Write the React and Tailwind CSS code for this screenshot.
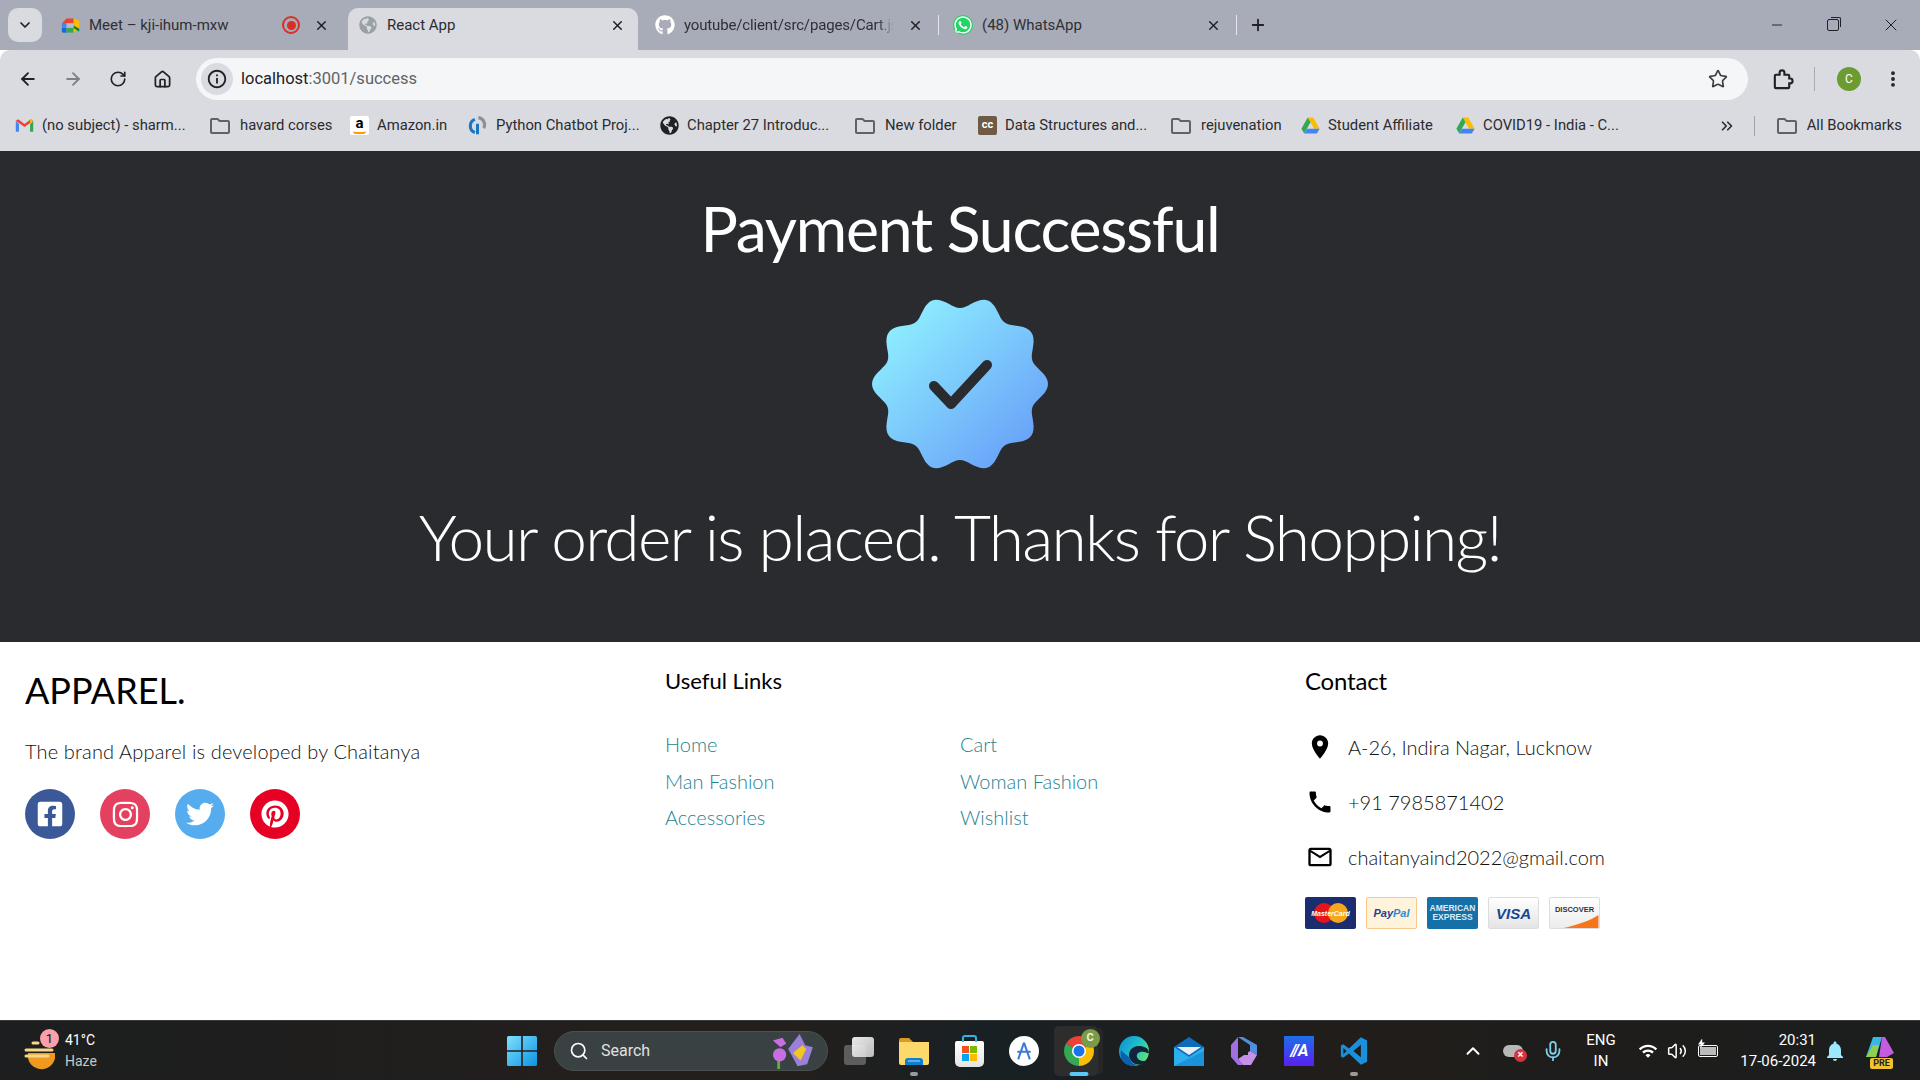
import React from 'react';
import { ArrowLeft, ArrowRight, RotateCw, Home, Star, X, Plus, Minus, EllipsisVertical, ChevronDown, ChevronUp, ChevronsRight, Search, Mic, Volume2 } from 'lucide-react';
import { FaFacebookSquare, FaInstagram, FaTwitter, FaPinterest, FaGithub, FaWhatsapp, FaGlobeAmericas } from 'react-icons/fa';
import { MdRoom, MdPhone, MdMailOutline, MdInfoOutline, MdOutlineFolder, MdWifi, MdNotifications } from 'react-icons/md';

// wavy badge outline, 10 lobes with a notch on top
const badgePath = (() => {
    const pts = [];
    for (let i = 0; i < 360; i += 2) {
        const t = (i * Math.PI) / 180;
        const r = 82 - 6 * Math.cos(10 * t);
        pts.push(`${(88 + r * Math.sin(t)).toFixed(1)},${(88 - r * Math.cos(t)).toFixed(1)}`);
    }
    return `M${pts.join('L')}Z`;
})();

const Sector = ({ a, b, r = 12, fill }) => {
    const p = (deg) => `${12 + r * Math.cos((deg * Math.PI) / 180)} ${12 + r * Math.sin((deg * Math.PI) / 180)}`;
    return <path d={`M12 12L${p(a)}A${r} ${r} 0 0 1 ${p(b)}Z`} fill={fill} />;
};

const ChromeIcon = () => (
    <svg viewBox="0 0 24 24" className="w-[30px] h-[30px]">
        <Sector a={-150} b={-30} fill="#ea4335" />
        <Sector a={-30} b={90} fill="#fbbc04" />
        <Sector a={90} b={210} fill="#34a853" />
        <circle cx="12" cy="12" r="5.6" fill="#fff" />
        <circle cx="12" cy="12" r="4.4" fill="#1a73e8" />
    </svg>
);

const DriveIcon = () => (
    <svg viewBox="0 0 24 24" className="w-[19px] h-[19px]">
        <path d="M8.5 2h7l8 14h-7z" fill="#fbbc04" />
        <path d="M8.5 2l-8 14 3.5 6 8-14z" fill="#34a853" />
        <path d="M4 22h16l3.500-6h-16z" fill="#4285f4" />
    </svg>
);

const GmailIcon = () => (
    <svg viewBox="0 0 24 24" className="w-[19px] h-[19px]">
        <path d="M1 6v14h4V10z" fill="#4285f4" />
        <path d="M23 6v14h-4V10z" fill="#34a853" />
        <path d="M1 6l11 8 11-8-3-2-8 6-8-6z" fill="#ea4335" />
        <path d="M20 4l3 2-4 4V6z" fill="#fbbc04" />
    </svg>
);

const MeetIcon = () => (
    <svg viewBox="0 0 24 24" className="w-[19px] h-[19px]">
        <path d="M7 3h9v6H1z" fill="#ea4335" />
        <path d="M1 9h6v6H1z" fill="#4285f4" />
        <path d="M1 15h6v6H3a2 2 0 0 1-2-2z" fill="#1967d2" />
        <path d="M7 15h9v6H7z" fill="#34a853" />
        <path d="M7 9h9v6H7z" fill="#fff" fillOpacity="0.2" />
        <path d="M16 3v18l7-6V6z" fill="#fbbc04" />
        <path d="M16 12l7 4V20l-7-5z" fill="#00832d" />
    </svg>
);

const FolderIcon = () => <MdOutlineFolder className="w-[24px] h-[24px] text-[#5f6368] shrink-0" />;

const Tab = ({ w, pl, mr, icon, title, extra, active, fade, sep }) => (
    <div className={`relative h-[42px] pb-[8px] flex items-center shrink-0 ${w} ${pl} ${active ? 'bg-[#d9dbe1] rounded-t-[10px]' : ''}`}>
        <div className="w-[20px] flex justify-center shrink-0">{icon}</div>
        <div className={`ml-[9px] flex-1 overflow-hidden whitespace-nowrap text-[15px] ${active ? 'text-[#2a2c30]' : 'text-[#2e3034]'} ${fade ? 'tracking-[-0.15px] [mask-image:linear-gradient(to_right,black_92%,transparent)]' : ''}`}>
            {title}
        </div>
        {extra}
        <X size={15} strokeWidth={2.4} className={`text-[#202124] ml-[14px] shrink-0 ${mr}`} />
        {sep && <div className="w-px h-[20px] bg-[#e6e7ea] absolute right-0 top-[7px]" />}
    </div>
);

const Bookmark = ({ w, icon, label }) => (
    <div className={`flex items-center gap-[8px] shrink-0 whitespace-nowrap ${w}`}>
        {icon}
        <span>{label}</span>
    </div>
);

const BrowserChrome = () => (
    <div className="font-['Roboto',sans-serif]">
        <div className="h-[50px] bg-[#a8acb8] flex items-end pl-[8px]">
            <div className="h-[34px] w-[34px] mb-[8px] rounded-[10px] bg-[#d9dbe1] flex items-center justify-center shrink-0">
                <ChevronDown size={16} strokeWidth={2.6} className="text-[#202124]" />
            </div>
            <Tab
                w="w-[306px]"
                pl="pl-[18px]"
                mr="mr-[19px]"
                icon={<MeetIcon />}
                title="Meet – kji-ihum-mxw"
                extra={
                    <div className="w-[18px] h-[18px] rounded-full border-2 border-[#d93025] flex items-center justify-center shrink-0">
                        <div className="w-[9px] h-[9px] rounded-full bg-[#d93025]" />
                    </div>
                }
            />
            <Tab w="w-[290px]" pl="pl-[10px]" mr="mr-[13px]" active icon={<FaGlobeAmericas className="w-[18px] h-[18px] text-[#9aa0a6]" />} title="React App" />
            <Tab w="w-[301px]" pl="pl-[17px]" mr="mr-[16px]" fade sep icon={<FaGithub className="w-[20px] h-[20px] text-white" />} title="youtube/client/src/pages/Cart.js" />
            <Tab w="w-[298px]" pl="pl-[14px]" mr="mr-[16px]" sep icon={<FaWhatsapp className="w-[20px] h-[20px] text-white bg-[#25d366] rounded-full" />} title="(48) WhatsApp" />
            <div className="h-[42px] pb-[8px] flex items-center ml-[12px]">
                <Plus size={18} strokeWidth={2.4} className="text-[#202124]" />
            </div>
            <div className="ml-auto h-[50px] flex items-center text-[#202124]">
                <Minus size={16} strokeWidth={1.4} className="mr-[42px]" />
                <div className="relative w-[12px] h-[12px] border border-[#202124] rounded-[2px] mr-[42px]">
                    <div className="absolute -top-[3px] -right-[3px] w-[10px] h-[10px] border-t border-r border-[#202124] rounded-tr-[2px]" />
                </div>
                <X size={20} strokeWidth={1.2} className="mr-[19px]" />
            </div>
        </div>
        <div className="h-[50px] bg-[#d9dbe1] rounded-t-[10px] flex items-center text-[#202124]">
            <div className="flex items-center mt-[8px] pl-[18px]">
                <ArrowLeft size={20} strokeWidth={2.2} />
                <ArrowRight size={20} strokeWidth={2.2} className="ml-[25px] text-[#7d8087]" />
                <RotateCw size={18} strokeWidth={2.2} className="ml-[26px]" />
                <Home size={19} strokeWidth={2.2} className="ml-[26px]" />
                <div className="ml-[24px] w-[1552px] h-[42px] rounded-full bg-[#f5f6f8] flex items-center pl-[5px] shrink-0">
                    <div className="w-[32px] h-[32px] rounded-full bg-[#d9dbe1] flex items-center justify-center">
                        <MdInfoOutline className="w-[22px] h-[22px]" />
                    </div>
                    <div className="ml-[8px] text-[16.5px] text-[#202124] pt-[1px]">
                        localhost<span className="text-[#5f6368]">:3001/success</span>
                    </div>
                    <Star size={20} strokeWidth={2} className="ml-auto mr-[20px] text-[#3c4043]" />
                </div>
                <svg viewBox="0 0 24 24" className="ml-[23px] w-[23px] h-[23px]" fill="none" stroke="#202124" strokeWidth="2.2">
                    <path d="M5 7h4V5a2.500 2.500 0 0 1 5 0v2h4a1 1 0 0 1 1 1v3h1a2.500 2.500 0 0 1 0 5h-1v4a1 1 0 0 1-1 1H5a1 1 0 0 1-1-1V8a1 1 0 0 1 1-1z" />
                </svg>
                <div className="ml-[20px] w-px h-[24px] bg-[#a9abb2]" />
                <div className="ml-[22px] w-[24px] h-[24px] rounded-full bg-[#6c9b32] text-white text-[12px] flex items-center justify-center">C</div>
                <EllipsisVertical size={20} strokeWidth={2.6} className="ml-[22px]" />
            </div>
        </div>
        <div className="h-[51px] bg-[#d9dbe1] flex items-center pl-[15px] text-[14.8px] text-[#2a2c30]">
            <Bookmark w="w-[193px]" icon={<GmailIcon />} label="(no subject) - sharm..." />
            <Bookmark w="w-[142px]" icon={<FolderIcon />} label="havard corses" />
            <Bookmark
                w="w-[117px]"
                icon={
                    <div className="relative w-[19px] h-[19px] bg-white rounded-[2px] flex justify-center text-[15px] leading-[15px] font-bold text-black">
                        a<div className="absolute bottom-[1px] left-[3px] w-[13px] h-[3px] border-b-2 border-[#f90] rounded-b-full" />
                    </div>
                }
                label="Amazon.in"
            />
            <Bookmark
                w="w-[193px]"
                icon={
                    <svg viewBox="0 0 24 24" className="w-[21px] h-[21px]" fill="none" strokeWidth="3.5">
                        <path d="M9 5a8 8 0 0 0 0 15" stroke="#1a76c4" />
                        <path d="M12 22V10" stroke="#1a76c4" />
                        <path d="M13 3a8 8 0 0 1 6 12" stroke="#8a9099" />
                    </svg>
                }
                label="Python Chatbot Proj..."
            />
            <Bookmark w="w-[193px]" icon={<FaGlobeAmericas className="w-[19px] h-[19px] text-[#202124]" />} label="Chapter 27 Introduc..." />
            <Bookmark w="w-[125px]" icon={<FolderIcon />} label="New folder" />
            <Bookmark
                w="w-[191px]"
                icon={<div className="w-[19px] h-[19px] rounded-[2px] bg-[#6f5a45] text-white text-[11px] font-bold flex items-center justify-center">cc</div>}
                label="Data Structures and..."
            />
            <Bookmark w="w-[132px]" icon={<FolderIcon />} label="rejuvenation" />
            <Bookmark w="w-[155px]" icon={<DriveIcon />} label="Student Affiliate" />
            <Bookmark w="w-[200px]" icon={<DriveIcon />} label="COVID19 - India - C..." />
            <div className="ml-auto flex items-center pr-[18px]">
                <ChevronsRight size={18} strokeWidth={2.2} className="mr-[18px]" />
                <div className="w-px h-[20px] bg-[#a0a3aa] mr-[20px]" />
                <Bookmark w="" icon={<FolderIcon />} label="All Bookmarks" />
            </div>
        </div>
    </div>
);

const SuccessPanel = () => (
    <div className="h-[491px] bg-[#292b2f] flex flex-col items-center text-white font-['Lato',sans-serif] shrink-0">
        <h1 className="mt-[41px] text-[62.5px] leading-[72px] font-normal tracking-[-1.25px]">Payment Successful</h1>
        <svg viewBox="0 0 176 176" className="mt-[32px] w-[176px] h-[176px] -mb-[5px]">
            <defs>
                <linearGradient id="badge" x1="0.1" y1="0.1" x2="0.9" y2="0.9">
                    <stop offset="0" stopColor="#8ff0ff" />
                    <stop offset="1" stopColor="#68a0f8" />
                </linearGradient>
            </defs>
            <path d={badgePath} fill="url(#badge)" />
            <path d="M62 89l17 18 36-39" fill="none" stroke="#292b2f" strokeWidth="10" strokeLinecap="round" strokeLinejoin="round" transform="translate(0 1)" />
        </svg>
        <h2 className="mt-[32px] text-[64px] leading-[76px] font-light tracking-[-1.7px]">Your order is placed. Thanks for Shopping!</h2>
    </div>
);

const Card = ({ className, children }) => (
    <div className={`relative w-[51px] h-[32px] rounded-[2px] overflow-hidden flex items-center justify-center shrink-0 ${className}`}>{children}</div>
);

const Links = [
    ['Home', 'Cart'],
    ['Man Fashion', 'Woman Fashion'],
    ['Accessories', 'Wishlist'],
];

const Footer = () => (
    <div className="flex-1 bg-white flex font-['Lato',sans-serif] text-[#111]">
        <div className="w-[640px] p-[25px]">
            <h1 className="text-[36px] leading-[46px] font-normal text-black">APPAREL.</h1>
            <p className="mt-[26px] text-[20px] leading-[24px] font-light tracking-[0.15px]">The brand Apparel is developed by Chaitanya</p>
            <div className="mt-[26px] flex gap-[25px]">
                <div className="w-[50px] h-[50px] rounded-full bg-[#3b5999] flex items-center justify-center text-white"><FaFacebookSquare size={28} /></div>
                <div className="w-[50px] h-[50px] rounded-full bg-[#e4405f] flex items-center justify-center text-white"><FaInstagram size={29} /></div>
                <div className="w-[50px] h-[50px] rounded-full bg-[#55acee] flex items-center justify-center text-white"><FaTwitter size={28} /></div>
                <div className="w-[50px] h-[50px] rounded-full bg-[#e60023] flex items-center justify-center text-white"><FaPinterest size={28} /></div>
            </div>
        </div>
        <div className="w-[640px] p-[25px]">
            <h3 className="text-[22px] leading-[27px] font-normal text-black">Useful Links</h3>
            <div className="mt-[38px] flex flex-col gap-[12.500px]">
                {Links.map((row) => (
                    <div key={row[0]} className="grid grid-cols-2 text-[20px] leading-[24px] font-light text-[#1f8390]">
                        <div>{row[0]}</div>
                        <div>{row[1]}</div>
                    </div>
                ))}
            </div>
        </div>
        <div className="w-[640px] p-[25px]">
            <h3 className="text-[24px] leading-[27px] font-normal text-black tracking-[-0.2px]">Contact</h3>
            <div className="mt-[38px] flex flex-col gap-[25px] text-[20px] leading-[30px] font-light">
                <div className="flex items-center h-[30px]"><MdRoom size={28} className="text-black ml-[1px] mr-[14px]" />A-26, Indira Nagar, Lucknow</div>
                <div className="flex items-center h-[30px]"><MdPhone size={28} className="text-black ml-[1px] mr-[14px]" />+91 7985871402</div>
                <div className="flex items-center h-[30px]"><MdMailOutline size={28} className="text-black ml-[1px] mr-[14px]" />chaitanyaind2022@gmail.com</div>
            </div>
            <div className="mt-[25px] flex gap-[10px] font-['Liberation_Sans',sans-serif]">
                <Card className="bg-[#1b2d6e]">
                    <div className="w-[20px] h-[20px] rounded-full bg-[#e8141c] -mr-[6px]" />
                    <div className="w-[20px] h-[20px] rounded-full bg-[#f6a81c]" />
                    <span className="absolute text-[7px] italic font-bold text-white leading-none">MasterCard</span>
                </Card>
                <Card className="bg-[#fff3dc] border border-[#f8c88a]">
                    <span className="text-[11px] italic font-bold text-[#1f3f8f] leading-none">Pay<span className="text-[#2a8fd6]">Pal</span></span>
                </Card>
                <Card className="bg-[#1670a8]">
                    <div className="text-[8.500px] font-bold text-[#dcecf6] leading-[9px] text-center">AMERICAN<br />EXPRESS</div>
                </Card>
                <Card className="bg-gradient-to-b from-white to-[#e4e4e4] border border-[#ddd]">
                    <span className="text-[15px] italic font-bold text-[#16458f] leading-none">VISA</span>
                </Card>
                <Card className="bg-gradient-to-b from-white to-[#ececec] border border-[#ddd]">
                    <span className="text-[7.500px] font-bold text-[#333] leading-none -mt-[7px]">DISCOVER</span>
                    <svg viewBox="0 0 51 32" className="absolute inset-0 w-full h-full"><path d="M14 32C30 28 42 24 51 18v14z" fill="#f6761b" /></svg>
                </Card>
            </div>
        </div>
    </div>
);

const Slot = ({ children }) => <div className="relative w-[55px] h-[60px] flex items-center justify-center shrink-0">{children}</div>;

const Dot = ({ className }) => <div className={`absolute bottom-[5px] left-1/2 -translate-x-1/2 rounded-full h-[4px] ${className}`} />;

const Taskbar = () => (
    <div className="h-[60px] bg-[linear-gradient(90deg,#1c1e1f,#241f1c_40%,#182024_52%,#211d1a_70%,#1b1d1e)] border-t border-[#3a3b3c] flex items-center text-white font-['Roboto',sans-serif] shrink-0">
        <div className="w-[507px] flex items-center pl-[24px] shrink-0">
            <div className="relative w-[31px] h-[40px] mr-[10px]">
                <svg viewBox="0 0 31 40" className="w-full h-full">
                    <path d="M4 22h27a13 13 0 0 1-27 5z" fill="#ef9a1e" />
                    <path d="M0 19h26M0 25h22M7 12h5" stroke="#f5d78a" strokeWidth="3" strokeLinecap="round" transform="translate(2 0)" />
                </svg>
                <div className="absolute -top-[2px] right-[-4px] w-[19px] h-[19px] rounded-full bg-[#fb9fab] text-[#111] text-[13px] leading-[19px] text-center">1</div>
            </div>
            <div className="text-[14px] leading-[21px]">
                <div>41°C</div>
                <div className="text-[#c8c8c8]">Haze</div>
            </div>
        </div>
        <svg viewBox="0 0 30 30" className="w-[30px] h-[30px] shrink-0">
            <defs>
                <linearGradient id="win" x1="0" y1="0" x2="1" y2="1">
                    <stop offset="0" stopColor="#7fe0ff" />
                    <stop offset="1" stopColor="#0c93e0" />
                </linearGradient>
            </defs>
            <path d="M0 1.500A1.500 1.500 0 0 1 1.500 0H14.200V14.200H0zM15.800 0H28.500A1.500 1.500 0 0 1 30 1.500V14.200H15.800zM0 15.800H14.200V30H1.500A1.500 1.500 0 0 1 0 28.500zM15.800 15.800H30V28.500A1.500 1.500 0 0 1 28.500 30H15.800z" fill="url(#win)" />
        </svg>
        <div className="ml-[17px] w-[274px] h-[40px] rounded-full bg-[#3a4143] border border-[#4a4f50] flex items-center pl-[14px] shrink-0">
            <Search size={20} strokeWidth={2} className="text-white" />
            <span className="ml-[12px] text-[16px] text-[#e0e0e0]">Search</span>
            <svg viewBox="0 0 50 40" className="ml-auto mr-[12px] w-[48px] h-[38px]">
                <path d="M12 27v12" stroke="#5fae3c" strokeWidth="3" />
                <circle cx="13" cy="24" r="7" fill="#c86ee0" />
                <path d="M6 9l10-3 4 6-6 4z" fill="#c86ee0" />
                <path d="M22 18L34 2l6 12 8 2-6 18-10 2z" fill="#9b7fd8" />
                <path d="M27 22l10-8 4 4-6 12z" fill="#f2c81e" />
            </svg>
        </div>
        <div className="ml-[3.5px] flex items-center">
            <Slot>
                <div className="relative w-[30px] h-[28px]">
                    <div className="absolute left-0 bottom-0 w-[22px] h-[20px] rounded-[3px] bg-[#5d5d5d]" />
                    <div className="absolute right-0 top-0 w-[22px] h-[20px] rounded-[3px] bg-[linear-gradient(135deg,#fff,#cfcfcf)] opacity-90" />
                </div>
            </Slot>
            <Slot>
                <svg viewBox="0 0 30 28" className="w-[30px] h-[28px]">
                    <path d="M0 3a2 2 0 0 1 2-2h8l4 4H0z" fill="#d89d1e" />
                    <path d="M0 5h30v21a2 2 0 0 1-2 2H2a2 2 0 0 1-2-2z" fill="#fcd96a" />
                    <path d="M6 28v-4a3 3 0 0 1 3-3h12a3 3 0 0 1 3 3v4z" fill="#0c7fd0" />
                    <path d="M9 24h12" stroke="#fff" strokeOpacity="0.6" strokeWidth="1.2" />
                </svg>
                <Dot className="w-[8px] bg-[#9a9a9a]" />
            </Slot>
            <Slot>
                <div className="relative w-[29px] h-[26px] mt-[6px] bg-[linear-gradient(#fff,#e4e4e4)] rounded-b-[5px] rounded-t-[2px] grid gap-[1px] place-content-center justify-center [grid-template-columns:7px_7px]">
                    <div className="w-[7px] h-[7px] bg-[#f25022]" />
                    <div className="w-[7px] h-[7px] bg-[#7fba00]" />
                    <div className="w-[7px] h-[7px] bg-[#00a4ef]" />
                    <div className="w-[7px] h-[7px] bg-[#ffb900]" />
                    <div className="absolute -top-[6px] left-[7px] w-[15px] h-[7px] border-2 border-b-0 border-[#2bb5e8] rounded-t-[3px]" />
                </div>
            </Slot>
            <Slot>
                <div className="w-[30px] h-[30px] rounded-full bg-white flex items-center justify-center">
                    <svg viewBox="0 0 24 24" className="w-[20px] h-[20px]" fill="none" stroke="#3c78d8" strokeWidth="2.4">
                        <path d="M12 2L5 22M12 2l7 20M4 13h16" />
                    </svg>
                </div>
            </Slot>
            <Slot>
                <div className="absolute left-[2.5px] top-[5px] w-[44px] h-[50px] rounded-[5px] bg-[#2d2d2d]" />
                <div className="absolute left-[46.5px] top-[6px] w-[5px] h-[48px] rounded-r-[5px] bg-[#262626]" />
                <div className="relative"><ChromeIcon /></div>
                <div className="absolute top-[8px] right-[7px] w-[19px] h-[19px] rounded-full bg-[#7b9c46] text-[#eef3e2] text-[11px] font-bold flex items-center justify-center">C</div>
                <Dot className="w-[19px] bg-[#5cc8fa]" />
            </Slot>
            <Slot>
                <svg viewBox="0 0 30 30" className="w-[30px] h-[30px]">
                    <defs>
                        <linearGradient id="edge" x1="0" y1="0" x2="1" y2="0.6">
                            <stop offset="0" stopColor="#0c8bd8" />
                            <stop offset="0.6" stopColor="#1fc2c8" />
                            <stop offset="1" stopColor="#5ee07a" />
                        </linearGradient>
                    </defs>
                    <circle cx="15" cy="15" r="15" fill="url(#edge)" />
                    <path d="M30 17c0-5-5-7-10-7-8 0-12 7-9 13 2 4 7 7 13 5 2-1 4-2 5-4-4 2-10 1-11-3-1-3 2-6 7-5 3 0 4 2 5 1z" fill="#15233a" />
                    <path d="M12 30C4 28 0 22 2 14c3 4 6 4 9 9 1 3 3 5 7 6-2 1-4 1-6 1z" fill="#0b5fae" />
                </svg>
            </Slot>
            <Slot>
                <svg viewBox="0 0 30 30" className="w-[30px] h-[30px]">
                    <path d="M15 1L30 11v19H0V11z" fill="#0f6cbd" />
                    <path d="M3 11h24l-12 8z" fill="#e8f0f5" />
                    <path d="M0 11l15 10 15-10v19H0z" fill="#2bb0ec" />
                    <path d="M0 30l30-15v15z" fill="#1b92dc" />
                </svg>
            </Slot>
            <Slot>
                <svg viewBox="0 0 26 30" className="w-[26px] h-[30px]">
                    <path d="M7 1h5l14 8v10l-7-4V9z" fill="#4f8fe0" />
                    <path d="M7 1L0 9v12l7 8h5l-5-6z" fill="#a070e0" />
                    <path d="M7 23l12-8 7 4-6 10H12z" fill="#c590e8" />
                    <path d="M9 11h8v8H9z" fill="#1c1e22" />
                </svg>
            </Slot>
            <Slot>
                <div className="w-[30px] h-[30px] bg-[linear-gradient(#1d6fe8,#5b1ff0)] flex items-center justify-center text-white text-[16px] italic font-bold tracking-[-1px]">//A</div>
            </Slot>
            <Slot>
                <svg viewBox="0 0 24 24" className="w-[30px] h-[30px]">
                    <path fillRule="evenodd" d="M22.500 3.500L17.500 1 8 10 3.400 6.600 1.500 7.600v8.800l1.900 1L8 14l9.500 9 5-2.500zM17.500 7l-6 5 6 5zM3.500 9.500v5L6 12z" fill="#1a8fdc" />
                </svg>
                <Dot className="w-[8px] bg-[#9a9a9a]" />
            </Slot>
        </div>
        <ChevronUp size={22} strokeWidth={2.2} className="ml-[80.5px] shrink-0" />
        <div className="relative ml-[19px] w-[20px] h-[12px] rounded-full bg-[#b8b8b8] shrink-0">
            <div className="absolute -right-[4px] -bottom-[5px] w-[13px] h-[13px] rounded-full bg-[#d8323c] text-white text-[11px] leading-[12px] text-center font-bold">×</div>
        </div>
        <Mic size={22} strokeWidth={2} className="ml-[19px] text-[#7cd0e8] shrink-0" />
        <div className="ml-[17px] w-[40px] text-center text-[15px] leading-[21px] shrink-0">
            <div>ENG</div>
            <div>IN</div>
        </div>
        <MdWifi size={20} className="ml-[17px] shrink-0" />
        <Volume2 size={20} strokeWidth={1.8} className="ml-[9px] shrink-0" />
        <div className="relative ml-[11px] w-[20px] h-[12px] border-[1.5px] border-white rounded-[2px] shrink-0">
            <div className="absolute inset-[1px] bg-white/70" />
            <div className="absolute -left-[1px] -top-[7px] w-[7px] h-[10px] bg-white [clip-path:polygon(60%_0,0_60%,40%_60%,30%_100%,100%_40%,60%_40%)]" />
        </div>
        <div className="ml-[10px] w-[88px] text-right text-[15px] leading-[21px] shrink-0">
            <div>20:31</div>
            <div>17-06-2024</div>
        </div>
        <MdNotifications size={24} className="ml-[7px] text-[#9be8ff] shrink-0" />
        <div className="relative ml-[18px] w-[30px] h-[30px] shrink-0">
            <svg viewBox="0 0 30 26" className="w-[30px] h-[26px]">
                <path d="M8 1h9l-6 20H1z" fill="#38b6e8" />
                <path d="M17 1h3l9 16-7 4H14z" fill="#c45ce0" />
                <path d="M1 21L8 9h6l-3 12z" fill="#8ed04c" />
            </svg>
            <div className="absolute -bottom-[3px] left-[5px] w-[23px] h-[11px] rounded-[2px] bg-[#f2c230] text-[9px] leading-[11px] font-bold text-[#222] text-center">PRE</div>
        </div>
    </div>
);

const App = () => (
    <div className="w-[1920px] h-[1080px] overflow-hidden flex flex-col">
        <BrowserChrome />
        <SuccessPanel />
        <Footer />
        <Taskbar />
    </div>
);

export default App;
